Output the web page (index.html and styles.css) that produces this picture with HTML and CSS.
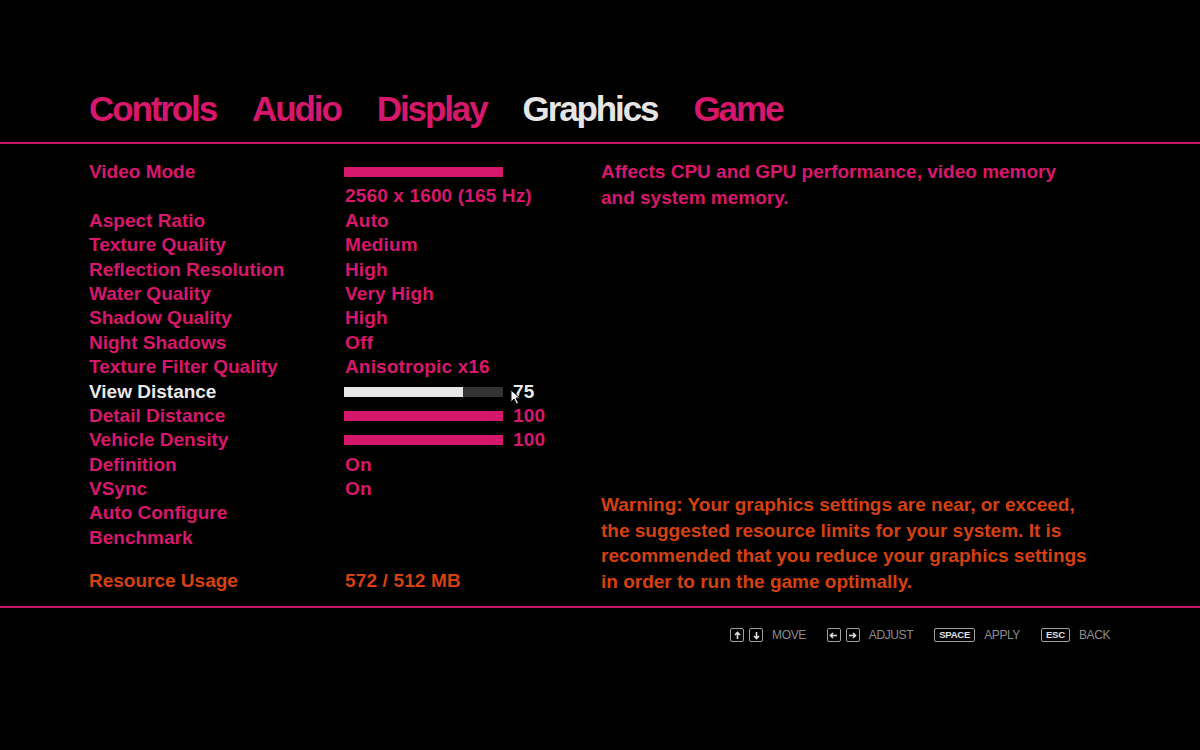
FILE: index.html
```html
<!DOCTYPE html>
<html lang="en">
<head>
    <meta charset="UTF-8">
    <title>Options - Graphics</title>
    <link rel="stylesheet" href="styles.css">
</head>
<body>
    <nav class="tabs">
        <span class="tab">Controls</span>
        <span class="tab">Audio</span>
        <span class="tab">Display</span>
        <span class="tab active">Graphics</span>
        <span class="tab">Game</span>
    </nav>
    <div class="rule"></div>

    <main class="content">
        <div class="settings">
            <div class="label">Video Mode</div>
            <div class="value"><span class="bar"></span></div>
            <div class="label"></div>
            <div class="value">2560 x 1600 (165 Hz)</div>
            <div class="label">Aspect Ratio</div>
            <div class="value">Auto</div>
            <div class="label">Texture Quality</div>
            <div class="value">Medium</div>
            <div class="label">Reflection Resolution</div>
            <div class="value">High</div>
            <div class="label">Water Quality</div>
            <div class="value">Very High</div>
            <div class="label">Shadow Quality</div>
            <div class="value">High</div>
            <div class="label">Night Shadows</div>
            <div class="value">Off</div>
            <div class="label">Texture Filter Quality</div>
            <div class="value">Anisotropic x16</div>
            <div class="label selected">View Distance</div>
            <div class="value slider selected">
                <span class="bar dim"><span class="fill" style="width: 75%"></span></span>
                <span class="num">75</span>
                <svg class="cursor" width="11" height="16" viewBox="0 0 11 16">
                    <path d="M1 1 L1 13 L4 10 L6.5 15 L8.5 14 L6 9 L10 9 Z" fill="#f2f2f2" stroke="#111" stroke-width="1"/>
                </svg>
            </div>
            <div class="label">Detail Distance</div>
            <div class="value slider"><span class="bar"></span><span class="num">100</span></div>
            <div class="label">Vehicle Density</div>
            <div class="value slider"><span class="bar"></span><span class="num">100</span></div>
            <div class="label">Definition</div>
            <div class="value">On</div>
            <div class="label">VSync</div>
            <div class="value">On</div>
            <div class="label">Auto Configure</div>
            <div class="value"></div>
            <div class="label">Benchmark</div>
            <div class="value"></div>
            <div class="label warn usage">Resource Usage</div>
            <div class="value warn usage">572 / 512 MB</div>
        </div>

        <aside class="info">
            <p class="desc">Affects CPU and GPU performance, video memory<br>and system memory.</p>
            <p class="warning">Warning: Your graphics settings are near, or exceed,<br>the suggested resource limits for your system. It is<br>recommended that you reduce your graphics settings<br>in order to run the game optimally.</p>
        </aside>
    </main>
    <div class="rule"></div>

    <footer class="hints">
        <div class="hint">
            <span class="key"><svg width="9" height="9" viewBox="0 0 9 9"><path d="M4.5 8V1.5M2 4 4.5 1.5 7 4" fill="none" stroke="#e0e0e0" stroke-width="1.6"/></svg></span>
            <span class="key"><svg width="9" height="9" viewBox="0 0 9 9"><path d="M4.5 1v6.5M2 5 4.5 7.5 7 5" fill="none" stroke="#e0e0e0" stroke-width="1.6"/></svg></span>
            <span class="hint-text">MOVE</span>
        </div>
        <div class="hint">
            <span class="key"><svg width="9" height="9" viewBox="0 0 9 9"><path d="M8 4.5H1.5M4 2 1.5 4.5 4 7" fill="none" stroke="#e0e0e0" stroke-width="1.6"/></svg></span>
            <span class="key"><svg width="9" height="9" viewBox="0 0 9 9"><path d="M1 4.5h6.5M5 2 7.5 4.5 5 7" fill="none" stroke="#e0e0e0" stroke-width="1.6"/></svg></span>
            <span class="hint-text">ADJUST</span>
        </div>
        <div class="hint">
            <span class="key wide">SPACE</span>
            <span class="hint-text">APPLY</span>
        </div>
        <div class="hint">
            <span class="key wide">ESC</span>
            <span class="hint-text">BACK</span>
        </div>
    </footer>
</body>
</html>
```

FILE: styles.css
```css
body {
    margin: 0;
    background: #000;
    color: #d6176c;
    font-family: "Liberation Sans", Arial, sans-serif;
    font-weight: bold;
    width: 1200px;
    height: 750px;
    overflow: hidden;
}
.tabs {
    display: flex;
    gap: 36px;
    padding: 89px 0 0 89px;
    height: 40px;
    margin-bottom: 13px;
    font-size: 35px;
    line-height: 40px;
    letter-spacing: -2.1px;
}
.tab {
    color: #d6176c;
}
.tab.active {
    color: #e6e6e6;
}
.rule {
    height: 2px;
    background: #c8176a;
}
.content {
    display: flex;
    padding: 16px 0 13px 89px;
    font-size: 19px;
}
.settings {
    display: grid;
    grid-template-columns: 256px 256px;
    line-height: 24.4px;
    align-content: start;
}
.label, .value {
    height: 24.4px;
    white-space: nowrap;
}
.value {
    display: flex;
    align-items: center;
    letter-spacing: 0.15px;
}
.selected {
    color: #e8e8e8;
}
.warn {
    color: #d5400f;
}
.usage {
    margin-top: 18.6px;
}
.slider {
    position: relative;
}
.bar {
    display: inline-block;
    width: 159px;
    height: 10px;
    margin-left: -1px;
    background: #d6176c;
}
.bar.dim {
    background: #333;
}
.fill {
    display: block;
    height: 100%;
    background: #e6e6e6;
}
.num {
    margin-left: 10px;
}
.cursor {
    position: absolute;
    left: 165px;
    top: 9px;
}
.info {
    display: flex;
    flex-direction: column;
    justify-content: space-between;
    width: 510px;
}
.info p {
    margin: 0;
    line-height: 25.5px;
}
.desc {
    margin-top: -1px !important;
}
.warning {
    color: #d5400f;
    margin-bottom: -1px !important;
}
.hints {
    display: flex;
    justify-content: flex-end;
    gap: 21px;
    padding: 20px 90px 0 0;
    font-family: "Liberation Sans", Arial, sans-serif;
    font-weight: normal;
    font-size: 12px;
    line-height: 14px;
    color: #8c8c8c;
}
.hint {
    display: flex;
    align-items: center;
    gap: 5px;
}
.key {
    display: inline-flex;
    align-items: center;
    justify-content: center;
    box-sizing: border-box;
    width: 14px;
    height: 14px;
    border: 1px solid #a0a0a0;
    border-radius: 2px;
    color: #e0e0e0;
    font-size: 9.5px;
    font-weight: bold;
}
.key.wide {
    width: auto;
    padding: 0 4px;
    letter-spacing: -0.2px;
}
.hint-text {
    margin-left: 4px;
    letter-spacing: -0.4px;
}
```
